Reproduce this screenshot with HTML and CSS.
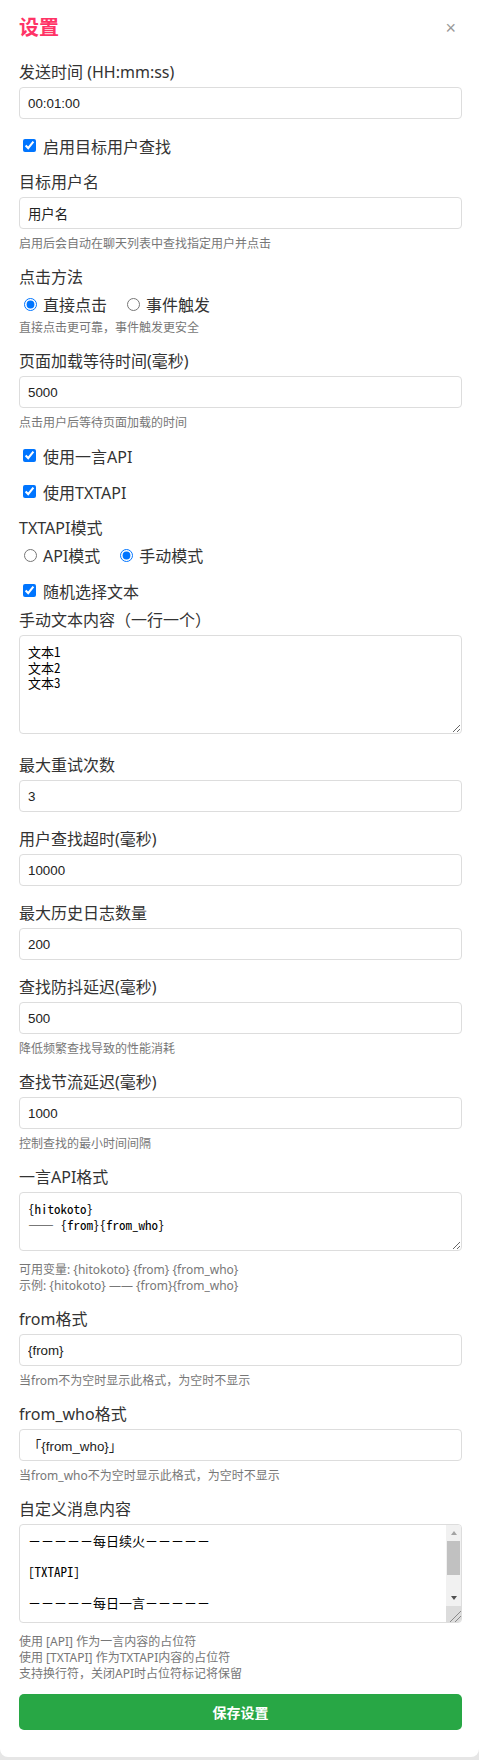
FILE: index.html
```html
<!DOCTYPE html>
<html lang="zh-CN">
<head>
<meta charset="utf-8">
<title>设置</title>
<link rel="stylesheet" href="styles.css">
</head>
<body>
<div class="card">
  <div class="header">
    <h2 class="title">设置</h2>
    <span class="close">×</span>
  </div>

  <div class="group">
    <label class="label">发送时间 (HH:mm:ss)</label>
    <input class="field" type="text" value="00:01:00">
  </div>

  <label class="check group">
    <input type="checkbox" checked><span>启用目标用户查找</span>
  </label>

  <div class="group">
    <label class="label">目标用户名</label>
    <input class="field" type="text" value="用户名">
    <div class="hint">启用后会自动在聊天列表中查找指定用户并点击</div>
  </div>

  <div class="group">
    <label class="label">点击方法</label>
    <div class="radios">
      <label class="radio"><input type="radio" name="m" checked><span>直接点击</span></label>
      <label class="radio"><input type="radio" name="m"><span>事件触发</span></label>
    </div>
    <div class="hint">直接点击更可靠，事件触发更安全</div>
  </div>

  <div class="group">
    <label class="label">页面加载等待时间(毫秒)</label>
    <input class="field" type="text" value="5000">
    <div class="hint">点击用户后等待页面加载的时间</div>
  </div>

  <label class="check group">
    <input type="checkbox" checked><span>使用一言API</span>
  </label>

  <label class="check group">
    <input type="checkbox" checked><span>使用TXTAPI</span>
  </label>

  <div class="group">
    <label class="label">TXTAPI模式</label>
    <div class="radios">
      <label class="radio"><input type="radio" name="t"><span>API模式</span></label>
      <label class="radio"><input type="radio" name="t" checked><span>手动模式</span></label>
    </div>
  </div>

  <label class="check group g-close">
    <input type="checkbox" checked><span>随机选择文本</span>
  </label>

  <div class="group">
    <label class="label">手动文本内容（一行一个）</label>
    <textarea class="field area tall">文本1
文本2
文本3</textarea>
  </div>

  <div class="group">
    <label class="label">最大重试次数</label>
    <input class="field" type="text" value="3">
  </div>

  <div class="group">
    <label class="label">用户查找超时(毫秒)</label>
    <input class="field" type="text" value="10000">
  </div>

  <div class="group">
    <label class="label">最大历史日志数量</label>
    <input class="field" type="text" value="200">
  </div>

  <div class="group">
    <label class="label">查找防抖延迟(毫秒)</label>
    <input class="field" type="text" value="500">
    <div class="hint">降低频繁查找导致的性能消耗</div>
  </div>

  <div class="group">
    <label class="label">查找节流延迟(毫秒)</label>
    <input class="field" type="text" value="1000">
    <div class="hint">控制查找的最小时间间隔</div>
  </div>

  <div class="group">
    <label class="label">一言API格式</label>
    <textarea class="field area short">{hitokoto}
—— {from}{from_who}</textarea>
    <div class="hint">可用变量: {hitokoto} {from} {from_who}<br>示例: {hitokoto} —— {from}{from_who}</div>
  </div>

  <div class="group">
    <label class="label">from格式</label>
    <input class="field" type="text" value="{from}">
    <div class="hint">当from不为空时显示此格式，为空时不显示</div>
  </div>

  <div class="group">
    <label class="label">from_who格式</label>
    <input class="field" type="text" value="「{from_who}」">
    <div class="hint">当from_who不为空时显示此格式，为空时不显示</div>
  </div>

  <div class="group">
    <label class="label">自定义消息内容</label>
    <div class="area-wrap">
      <textarea class="field area tall scroll">－－－－－每日续火－－－－－

[TXTAPI]

－－－－－每日一言－－－－－

[API]

－－－－－－－－－－－－－－



</textarea>
      <div class="sbar" aria-hidden="true">
        <span class="sb-btn sb-up"></span>
        <span class="sb-thumb"></span>
        <span class="sb-track"></span>
        <span class="sb-btn sb-down"></span>
        <span class="sb-corner"></span>
      </div>
    </div>
    <div class="hint">使用 [API] 作为一言内容的占位符<br>使用 [TXTAPI] 作为TXTAPI内容的占位符<br>支持换行符，关闭API时占位符标记将保留</div>
  </div>

  <button class="save" type="button">保存设置</button>
</div>
</body>
</html>
```

FILE: styles.css
```css
html, body {
  margin: 0;
  padding: 0;
}

body {
  background: #e6e6e6;
  font-family: "Noto Sans", "Noto Sans CJK SC", sans-serif;
  color: #333;
}

.card {
  background: #fff;
  border-radius: 0 0 8px 8px;
  padding: 14px 17px 20px 19px;
  height: 1757px;
  box-sizing: border-box;
}

.header {
  display: flex;
  justify-content: space-between;
  align-items: center;
  margin-bottom: 17px;
}

.title {
  margin: 0;
  font-size: 20px;
  line-height: 28px;
  font-weight: bold;
  color: #ff3366;
}

.close {
  font-family: "Liberation Sans", sans-serif;
  font-size: 18px;
  line-height: 28px;
  color: #999;
  padding: 0 6px;
}

.group {
  display: flex;
  flex-direction: column;
  margin-bottom: 11px;
}

.label {
  display: block;
  font-size: 16px;
  line-height: 26px;
  margin-bottom: 2px;
  color: #333;
}

.field {
  display: block;
  width: 100%;
  box-sizing: border-box;
  height: 32px;
  padding: 0 8px;
  border: 1px solid #ddd;
  border-radius: 4px;
  font-family: "Liberation Sans", "Noto Sans CJK SC", sans-serif;
  font-size: 13.33px;
  color: #222;
  margin: 0 0 3px;
  background: #fff;
  outline: none;
}

.area {
  padding: 8px;
  font-family: "Noto Sans Mono CJK SC", "Liberation Mono", "Noto Sans CJK SC", monospace;
  font-size: 13px;
  line-height: 15.5px;
  color: #000;
  margin-bottom: 7px;
  white-space: pre;
  overflow: hidden;
}

.area.tall {
  height: 99px;
}

.area.short {
  height: 59px;
}

.area-wrap {
  position: relative;
  margin-bottom: 7px;
}

.area-wrap .area {
  margin: 0;
  padding-right: 24px;
}

.sbar {
  position: absolute;
  top: 1px;
  right: 1px;
  bottom: 1px;
  width: 15px;
  display: flex;
  flex-direction: column;
  background: #f1f1f1;
  border-radius: 0 3px 3px 0;
  overflow: hidden;
}

.sb-btn {
  height: 16px;
  flex: none;
  display: flex;
  align-items: center;
  justify-content: center;
}

.sb-btn::before {
  content: "";
  width: 0;
  height: 0;
  border-left: 3.5px solid transparent;
  border-right: 3.5px solid transparent;
}

.sb-up::before {
  border-bottom: 4px solid #a3a3a3;
}

.sb-down::before {
  border-top: 4px solid #505050;
}

.sb-thumb {
  height: 34px;
  flex: none;
  margin: 0 1px;
  background: #c1c1c1;
}

.sb-track {
  flex: 1;
}

.sb-corner {
  height: 16px;
  flex: none;
  background:
    linear-gradient(135deg, transparent 0 62%, #8a8a8a 62% 66%, transparent 66% 78%, #8a8a8a 78% 82%, transparent 82%),
    #dcdcdc;
}

.hint {
  font-size: 12px;
  line-height: 16px;
  color: #777;
  margin-top: 4px;
  margin-bottom: 1px;
}

.check {
  flex-direction: row;
  align-items: center;
  height: 25px;
  font-size: 16px;
  color: #333;
}

.check input {
  margin: 0 7px 0 4px;
  width: 13px;
  height: 13px;
}

.g-close {
  margin-bottom: 4px;
}

.radios {
  display: flex;
  align-items: center;
  height: 24px;
}

.radio {
  display: flex;
  align-items: center;
  font-size: 16px;
  margin-right: 15px;
  color: #333;
}

.radio input {
  margin: 0 6px 0 5px;
  width: 13px;
  height: 13px;
}

.save {
  display: block;
  width: 100%;
  height: 36px;
  margin-top: 8px;
  border: none;
  border-radius: 5px;
  background: #28a745;
  color: #fff;
  font-family: "Noto Sans CJK SC", sans-serif;
  font-size: 14px;
  font-weight: bold;
}
```
